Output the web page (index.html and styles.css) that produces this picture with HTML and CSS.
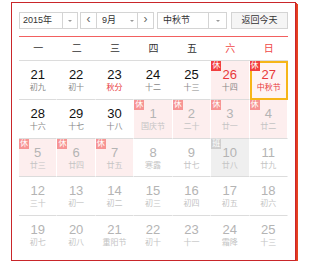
FILE: index.html
```html
<!DOCTYPE html>
<html lang="zh-CN">
<head>
  <meta charset="UTF-8" />
  <title>万年历</title>
  <link rel="stylesheet" href="styles.css">
</head>
<body>

  <div class="calendar">
    <!-- Barre d'outils -->
    <div class="toolbar">
      <div class="select year-select">
        <span class="select-text">2015年</span>
        <span class="select-arrow"><i></i></span>
      </div>
      <div class="select month-select">
        <span class="nav-btn">&lsaquo;</span>
        <span class="select-text">9月</span>
        <span class="select-arrow plain"><i></i></span>
        <span class="nav-btn right">&rsaquo;</span>
      </div>
      <div class="select holiday-select">
        <span class="select-text">中秋节</span>
        <span class="select-arrow"><i></i></span>
      </div>
      <div class="today-btn">返回今天</div>
    </div>

    <div class="week">
      <span>一</span><span>二</span><span>三</span><span>四</span><span>五</span>
      <span class="weekend">六</span><span class="weekend">日</span>
    </div>

    <div class="days">
      <!-- semaine 1 -->
      <div class="day"><b>21</b><span class="lunar">初九</span></div>
      <div class="day"><b>22</b><span class="lunar">初十</span></div>
      <div class="day"><b>23</b><span class="lunar red">秋分</span></div>
      <div class="day"><b>24</b><span class="lunar">十二</span></div>
      <div class="day"><b>25</b><span class="lunar">十三</span></div>
      <div class="day rest weekend"><span class="tag">休</span><b>26</b><span class="lunar">十四</span></div>
      <div class="day rest weekend today"><span class="tag">休</span><b>27</b><span class="lunar red">中秋节</span></div>

      <!-- semaine 2 -->
      <div class="day"><b>28</b><span class="lunar">十六</span></div>
      <div class="day"><b>29</b><span class="lunar">十七</span></div>
      <div class="day"><b>30</b><span class="lunar">十八</span></div>
      <div class="day other rest"><span class="tag">休</span><b>1</b><span class="lunar">国庆节</span></div>
      <div class="day other rest"><span class="tag">休</span><b>2</b><span class="lunar">二十</span></div>
      <div class="day other rest"><span class="tag">休</span><b>3</b><span class="lunar">廿一</span></div>
      <div class="day other rest"><span class="tag">休</span><b>4</b><span class="lunar">廿二</span></div>

      <!-- semaine 3 -->
      <div class="day other rest"><span class="tag">休</span><b>5</b><span class="lunar">廿三</span></div>
      <div class="day other rest"><span class="tag">休</span><b>6</b><span class="lunar">廿四</span></div>
      <div class="day other rest"><span class="tag">休</span><b>7</b><span class="lunar">廿五</span></div>
      <div class="day other"><b>8</b><span class="lunar">寒露</span></div>
      <div class="day other"><b>9</b><span class="lunar">廿七</span></div>
      <div class="day other work"><span class="tag">班</span><b>10</b><span class="lunar">廿八</span></div>
      <div class="day other"><b>11</b><span class="lunar">廿九</span></div>

      <!-- semaine 4 -->
      <div class="day other"><b>12</b><span class="lunar">三十</span></div>
      <div class="day other"><b>13</b><span class="lunar">初一</span></div>
      <div class="day other"><b>14</b><span class="lunar">初二</span></div>
      <div class="day other"><b>15</b><span class="lunar">初三</span></div>
      <div class="day other"><b>16</b><span class="lunar">初四</span></div>
      <div class="day other"><b>17</b><span class="lunar">初五</span></div>
      <div class="day other"><b>18</b><span class="lunar">初六</span></div>

      <!-- semaine 5 -->
      <div class="day other"><b>19</b><span class="lunar">初七</span></div>
      <div class="day other"><b>20</b><span class="lunar">初八</span></div>
      <div class="day other"><b>21</b><span class="lunar">重阳节</span></div>
      <div class="day other"><b>22</b><span class="lunar">初十</span></div>
      <div class="day other"><b>23</b><span class="lunar">十一</span></div>
      <div class="day other"><b>24</b><span class="lunar">霜降</span></div>
      <div class="day other"><b>25</b><span class="lunar">十三</span></div>
    </div>
  </div>

</body>
</html>
```

FILE: styles.css
```css
body {
  margin: 0;
  background: #fff;
  font-family: "Liberation Sans", "Noto Sans CJK SC", sans-serif;
  color: #333;
}

.calendar {
  width: 269px;
  height: 248px;
  margin: 2px 0 0 11px;
  padding: 9px 7px 0 7px;
  border: 1px solid #c9262a;
  box-shadow: 1px 1px 0 #e23a22, 2px 2px 0 #e8441e;
}

/* Barre d'outils */
.toolbar {
  display: flex;
  height: 17px;
  padding-bottom: 7px;
  border-bottom: 1px solid #f26060;
  font-size: 9px;
}

.select {
  display: flex;
  height: 15px;
  border: 1px solid #d4d4d4;
  background: #fff;
  line-height: 15px;
}

.year-select {
  width: 57px;
}

.year-select .select-text {
  width: 39px;
  padding-left: 3px;
}

.month-select {
  width: 72px;
  margin-left: 2px;
}

.month-select .select-text {
  width: 24px;
  padding-left: 5px;
}

.holiday-select {
  width: 68px;
  margin-left: 3px;
}

.holiday-select .select-text {
  width: 45px;
  padding-left: 5px;
}

.select-arrow {
  flex: 1;
  display: flex;
  align-items: center;
  justify-content: center;
  border-left: 1px solid #d4d4d4;
}

.select-arrow.plain {
  border-left: none;
}

.select-arrow i {
  width: 0;
  height: 0;
  border-left: 2px solid transparent;
  border-right: 2px solid transparent;
  border-top: 2px solid #999;
}

.nav-btn {
  width: 15px;
  text-align: center;
  border-right: 1px solid #d4d4d4;
  font-size: 12px;
  color: #666;
  line-height: 13px;
}

.nav-btn.right {
  border-right: none;
  border-left: 1px solid #d4d4d4;
}

.today-btn {
  width: 55px;
  height: 15px;
  margin-left: 4px;
  border: 1px solid #d4d4d4;
  background: #f5f5f5;
  line-height: 15px;
  text-align: center;
  color: #333;
}

/* Jours de la semaine */
.week {
  display: grid;
  grid-template-columns: repeat(7, 1fr);
  height: 23px;
  line-height: 23px;
  border-bottom: 1px solid #dcdcdc;
  font-size: 10px;
  text-align: center;
  color: #333;
}

.week .weekend {
  color: #f04848;
}

/* Grille des jours */
.days {
  display: grid;
  grid-template-columns: repeat(7, 1fr);
  grid-auto-rows: 38.75px;
}

.day {
  position: relative;
  display: flex;
  flex-direction: column;
  align-items: center;
  padding-top: 7px;
  border-bottom: 1px solid #dcdcdc;
  border-right: 1px solid transparent;
  background-clip: padding-box;
  box-sizing: border-box;
}

.day:nth-last-child(-n+7) {
  border-bottom-color: transparent;
}

.day b {
  font-weight: normal;
  font-size: 13px;
  line-height: 14px;
  color: #111;
}

.lunar {
  margin-top: 1px;
  font-size: 8px;
  line-height: 10px;
  color: #888;
}

.lunar.red {
  color: #e8383a;
}

.day.weekend b {
  color: #e8383a;
}

.day.rest {
  background-color: #fdeeee;
}

.day.today {
  border: 2px solid #f6b619;
  padding-top: 5px;
  background-color: #fff4f3;
}

.day.today .tag {
  top: -2px;
  left: -2px;
}

.day.other b {
  color: #b4b4b4;
}

.day.other .lunar {
  color: #c4c4c4;
}

.day.work {
  background-color: #efefef;
}

.tag {
  position: absolute;
  top: 0;
  left: 0;
  width: 10px;
  height: 10px;
  background: #f23f3f;
  color: #fff;
  font-size: 8px;
  line-height: 10px;
  text-align: center;
}

.day.other.rest .tag {
  background: #f79494;
}

.day.work .tag {
  background: #cfcfcf;
}
```
